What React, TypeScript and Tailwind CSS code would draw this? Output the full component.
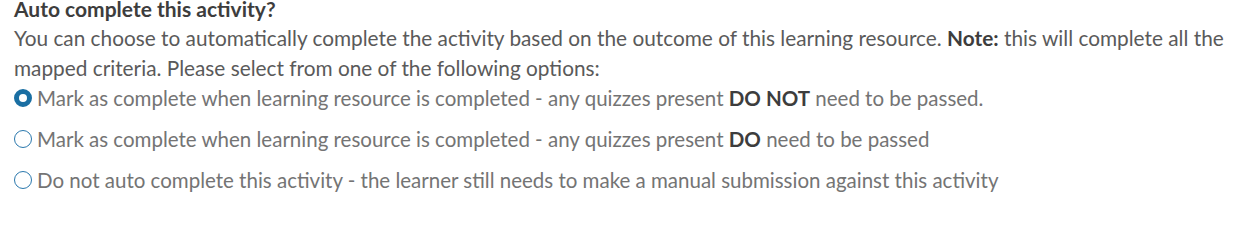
const OPTIONS = [
  {
    id: "passed-not",
    before: "Mark as complete when learning resource is completed - any quizzes present ",
    strong: "DO NOT",
    after: " need to be passed.",
  },
  {
    id: "passed",
    before: "Mark as complete when learning resource is completed - any quizzes present ",
    strong: "DO",
    after: " need to be passed",
  },
  {
    id: "manual",
    before: "Do not auto complete this activity - the learner still needs to make a manual submission against this activity",
    strong: "",
    after: "",
  },
];

const Radio = ({ checked }: { checked: boolean }) => (
  <span
    className={`inline-block w-[18px] h-[18px] rounded-full shrink-0 bg-white ${
      checked ? "border-[5px] border-[#1a6fa3]" : "border-[1.5px] border-[#2a78ad]"
    }`}
  />
);

export default function App() {
  const selected = "passed-not";
  return (
    <div className="bg-white w-[1247px] h-[201px] overflow-hidden pl-[14px] pr-[8px] font-['Lato',sans-serif]">
      <h3 className="text-[21px] font-bold text-[#3d3d3d] leading-[20px] -mt-[1px] whitespace-nowrap">
        Auto complete this activity?
      </h3>
      <p className="text-[20.8px] leading-[30px] text-[#5a5a5a] mt-[4px]">
        You can choose to automatically complete the activity based on the outcome of this learning resource.{" "}
        <strong className="font-bold text-[#3d3d3d]">Note:</strong> this will complete all the mapped criteria.
        Please select from one of the following options:
      </p>
      <div className="flex flex-col -mt-[6px]">
        {OPTIONS.map((o) => (
          <label
            key={o.id}
            className="flex items-center gap-[5px] h-[41px] text-[20.5px] leading-[30px] text-[#747474] whitespace-nowrap"
          >
            <Radio checked={o.id === selected} />
            <span>
              {o.before}
              {o.strong && <strong className="font-bold text-[#3d3d3d]">{o.strong}</strong>}
              {o.after}
            </span>
          </label>
        ))}
      </div>
    </div>
  );
}
